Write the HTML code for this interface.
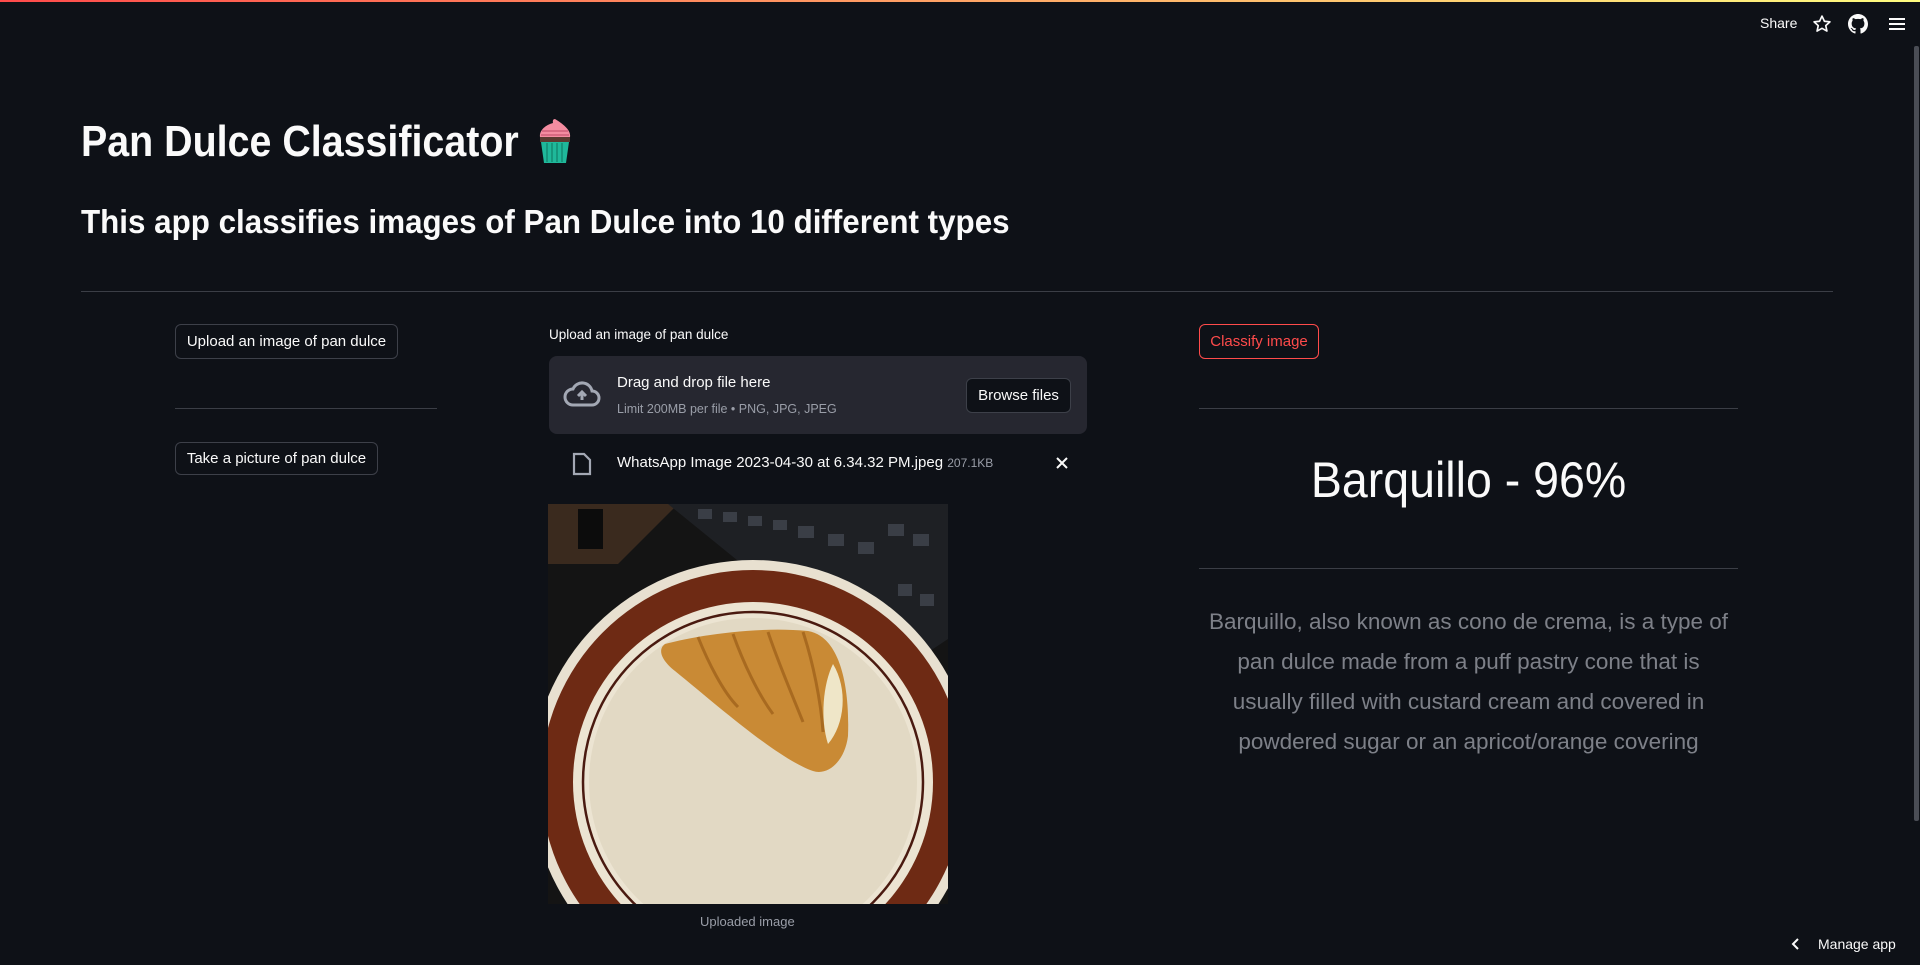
<!DOCTYPE html>
<html><head><meta charset="utf-8"><style>
*{margin:0;padding:0;box-sizing:border-box}
body{width:1920px;height:965px;background:#0e1117;overflow:hidden;position:relative;font-family:"Source Sans Pro","Liberation Sans",sans-serif;color:#fafafa}
.abs{position:absolute;white-space:nowrap}
.topbar{position:absolute;left:0;top:0;width:1920px;height:2px;background:linear-gradient(90deg,#ff4b4b,#fffd80)}
.sx{display:inline-block;transform-origin:left center}
.hr{position:absolute;height:1px;background:#3b3e46}
.btn{position:absolute;border:1px solid #3d4049;border-radius:6px;background:#0e1117;font-size:15px;display:flex;align-items:center;justify-content:center;color:#fafafa}
</style></head><body>
<div class="topbar"></div>
<div class="abs" style="left:1760px;top:15px;font-size:14px;">Share</div>
<svg class="abs" style="left:1812px;top:14px" width="20" height="20" viewBox="0 0 24 24" fill="none" stroke="#fafafa" stroke-width="2" stroke-linejoin="round"><path d="M12 2.5l2.9 6.2 6.6.7-5 4.5 1.4 6.6L12 17.2l-5.9 3.3 1.4-6.6-5-4.5 6.6-.7z"/></svg>
<svg class="abs" style="left:1848px;top:14px" width="20" height="20" viewBox="0 0 16 16" fill="#fafafa"><path d="M8 0C3.58 0 0 3.58 0 8c0 3.54 2.29 6.53 5.47 7.59.4.07.55-.17.55-.38 0-.19-.01-.82-.01-1.49-2.01.37-2.53-.49-2.69-.94-.09-.23-.48-.94-.82-1.13-.28-.15-.68-.52-.01-.53.63-.01 1.08.58 1.23.82.72 1.21 1.87.87 2.33.66.07-.52.28-.87.51-1.07-1.78-.2-3.64-.89-3.64-3.95 0-.87.31-1.59.82-2.15-.08-.2-.36-1.02.08-2.12 0 0 .67-.21 2.2.82.64-.18 1.32-.27 2-.27s1.36.09 2 .27c1.53-1.04 2.2-.82 2.2-.82.44 1.1.16 1.92.08 2.12.51.56.82 1.27.82 2.15 0 3.07-1.87 3.75-3.65 3.95.29.25.54.73.54 1.48 0 1.07-.01 1.93-.01 2.2 0 .21.15.46.55.38A8.01 8.01 0 0016 8c0-4.42-3.58-8-8-8z"/></svg>
<svg class="abs" style="left:1888px;top:16px" width="18" height="16" viewBox="0 0 18 16" stroke="#fafafa" stroke-width="2"><path d="M1 3h16M1 8h16M1 13h16"/></svg>
<div class="abs" style="left:1914px;top:46px;width:5px;height:775px;background:#4a4d55;border-radius:2px"></div>

<div class="abs" style="left:81px;top:112px;font-size:44px;font-weight:bold;line-height:60px"><span class="sx" style="transform:scaleX(0.895)">Pan Dulce Classificator</span></div>
<svg class="abs" style="left:533px;top:117px" width="44" height="48" viewBox="0 0 44 48"><path d="M22 2c-3 0-2 4-2 4-8 2-14 8-13 14l30 0c1-6-5-12-15-18z" fill="#f48ca0"/><path d="M9 14h26M8 18h28" stroke="#d96a82" stroke-width="2"/><rect x="7" y="20" width="30" height="5" fill="#5a3a30"/><path d="M8 25h28l-3 21H11z" fill="#1fb89a"/><path d="M14 26v19M19 26v19M24 26v19M29 26v19" stroke="#138a72" stroke-width="1.5"/></svg>
<div class="abs" style="left:81px;top:202px;font-size:33px;font-weight:bold;line-height:40px"><span class="sx" style="transform:scaleX(0.95)">This app classifies images of Pan Dulce into 10 different types</span></div>
<div class="hr" style="left:81px;top:291px;width:1752px"></div>

<div class="btn" style="left:175px;top:324px;width:223px;height:35px">Upload an image of pan dulce</div>
<div class="hr" style="left:175px;top:408px;width:262px"></div>
<div class="btn" style="left:175px;top:442px;width:203px;height:33px">Take a picture of pan dulce</div>

<div class="abs" style="left:549px;top:327px;font-size:13.5px">Upload an image of pan dulce</div>
<div class="abs" style="left:549px;top:356px;width:538px;height:78px;background:#262730;border-radius:8px"></div>
<svg class="abs" style="left:563px;top:380px" width="38" height="28" viewBox="0 0 38 28"><path d="M10 25h19a7 7 0 000-14 10 10 0 00-19-2 8 8 0 000 16z" fill="none" stroke="#a3a8b4" stroke-width="3"/><path d="M19 20v-8m-4 4l4-4 4 4" stroke="#a3a8b4" stroke-width="3" fill="none"/></svg>
<div class="abs" style="left:617px;top:374px;font-size:15px">Drag and drop file here</div>
<div class="abs" style="left:617px;top:402px;font-size:12.5px;color:#9a9ea8">Limit 200MB per file • PNG, JPG, JPEG</div>
<div class="btn" style="left:966px;top:378px;width:105px;height:35px;font-size:15px">Browse files</div>
<svg class="abs" style="left:572px;top:452px" width="20" height="24" viewBox="0 0 20 24" fill="none" stroke="#a3a8b4" stroke-width="2.2"><path d="M2 2h10l6 6v14H2z"/></svg>
<div class="abs" style="left:617px;top:454px;font-size:15px">WhatsApp Image 2023-04-30 at 6.34.32 PM.jpeg <span style="font-size:12px;color:#9a9ea8">207.1KB</span></div>
<svg class="abs" style="left:1055px;top:456px" width="14" height="14" viewBox="0 0 14 14" stroke="#fafafa" stroke-width="2"><path d="M2 2l10 10M12 2L2 12"/></svg>

<svg class="abs" style="left:548px;top:504px" width="400" height="400" viewBox="0 0 400 400">
<rect width="400" height="400" fill="#141414"/>
<path d="M0 0h130l-60 60H0z" fill="#3a2a1e"/>
<path d="M120 0h280v135l-60 40-140-110z" fill="#1e2024"/>
<g fill="#3a3e46"><rect x="150" y="5" width="14" height="10"/><rect x="175" y="8" width="14" height="10"/><rect x="200" y="12" width="14" height="10"/><rect x="225" y="16" width="14" height="10"/><rect x="250" y="22" width="16" height="12"/><rect x="280" y="30" width="16" height="12"/><rect x="310" y="38" width="16" height="12"/><rect x="340" y="20" width="16" height="12"/><rect x="365" y="30" width="16" height="12"/><rect x="350" y="80" width="14" height="12"/><rect x="372" y="90" width="14" height="12"/></g>
<rect x="30" y="5" width="25" height="40" fill="#0c0c0c"/>
<circle cx="205" cy="278" r="222" fill="#e8e0d0"/>
<circle cx="205" cy="278" r="212" fill="#6e2a14"/>
<circle cx="205" cy="278" r="180" fill="#ece4d2"/>
<circle cx="205" cy="278" r="170" fill="none" stroke="#4a1a10" stroke-width="2.5"/>
<circle cx="205" cy="278" r="164" fill="#e2d9c4"/>
<path d="M117 140c30-8 90-18 143-13 30 5 42 50 40 105-3 25-20 40-35 35-35-12-95-65-138-100-15-12-17-22-10-27z" fill="#c98a35"/>
<path d="M150 133c10 25 25 55 40 70M185 130c10 28 25 60 40 80M220 128c10 30 25 65 35 90M255 128c10 30 18 70 20 100" stroke="#a86a20" stroke-width="3" fill="none"/>
<path d="M285 160c15 25 12 60 -5 80-8-25-5-60 5-80z" fill="#efe6c8"/>
</svg>
<div class="abs" style="left:700px;top:914px;font-size:13px;color:#9a9ea8">Uploaded image</div>

<div class="btn" style="left:1199px;top:324px;width:120px;height:35px;border-color:#ff4b4b;color:#ff4b4b">Classify image</div>
<div class="hr" style="left:1199px;top:408px;width:539px"></div>
<div class="abs" style="left:1199px;top:450px;width:539px;text-align:center;font-size:50px;line-height:60px"><span class="sx" style="transform:scaleX(0.93);transform-origin:center">Barquillo - 96%</span></div>
<div class="hr" style="left:1199px;top:568px;width:539px"></div>
<div class="abs" style="left:1199px;top:602px;width:539px;text-align:center;font-size:22.5px;line-height:40px;color:#7d8088">Barquillo, also known as cono de crema, is a type of<br>pan dulce made from a puff pastry cone that is<br>usually filled with custard cream and covered in<br>powdered sugar or an apricot/orange covering</div>

<svg class="abs" style="left:1790px;top:937px" width="10" height="14" viewBox="0 0 10 14" stroke="#fafafa" stroke-width="2" fill="none"><path d="M8 2L3 7l5 5"/></svg>
<div class="abs" style="left:1818px;top:936px;font-size:14px">Manage app</div>
</body></html>
